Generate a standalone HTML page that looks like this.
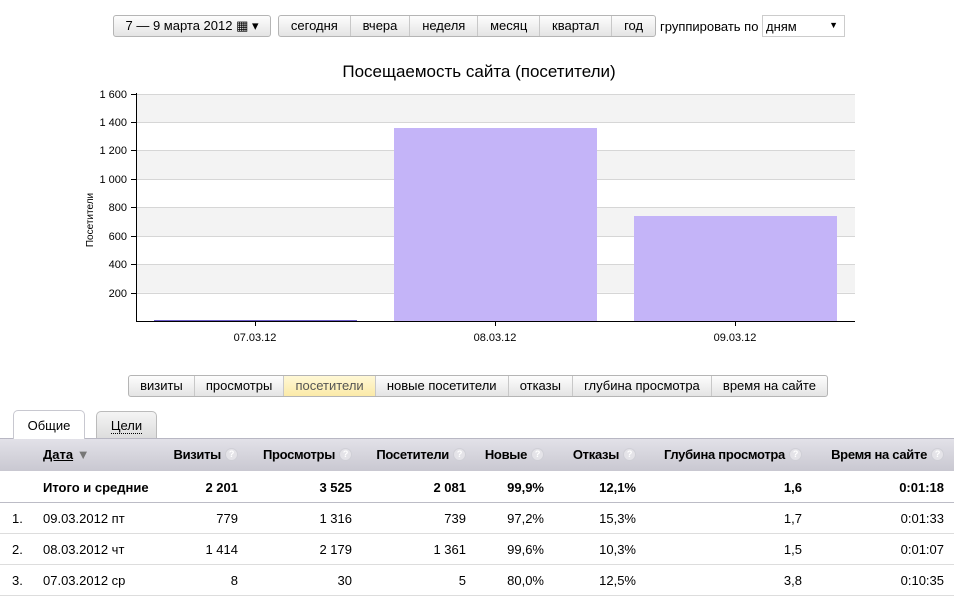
<!DOCTYPE html>
<html><head><meta charset="utf-8"><style>
body{margin:0;width:958px;height:596px;background:#fff;font-family:"Liberation Sans",Arial,sans-serif;font-size:13px;color:#000;position:relative;overflow:hidden}
.a{position:absolute;white-space:nowrap}
.btn{position:absolute;height:22px;border:1px solid #b5b5b5;border-radius:3px;background:linear-gradient(#fdfdfd,#e4e4e4);display:flex;box-sizing:border-box;white-space:nowrap}
.btn span{display:block;flex:auto;text-align:center;padding:0 10px;line-height:20px;border-left:1px solid #c8c8c8}
.btn span:first-child{border-left:none}
.btn span.on{background:linear-gradient(#fff8d6,#fbeaa8);color:#555}
.q{display:inline-block;width:13px;height:13px;border-radius:50%;background:#e4e3e8;border:1px solid #cfcfd6;box-sizing:border-box;color:#fff;font-size:9px;line-height:11px;text-align:center;font-weight:bold;margin-left:4px;vertical-align:top;margin-top:1px}
.r{position:absolute;text-align:right;white-space:nowrap;line-height:15px}
.row{position:absolute;left:0;width:954px;border-bottom:1px solid #ddd}
.h{font-weight:bold}
.hd{letter-spacing:-0.3px}
</style></head><body>
<div class="btn" style="left:113px;top:15px;width:158px"><span style="padding:0">7 — 9 марта 2012 ▦ ▾</span></div>
<div class="btn" style="left:278px;top:15px;width:378px"><span>сегодня</span><span>вчера</span><span>неделя</span><span>месяц</span><span>квартал</span><span>год</span></div>
<div class="a" style="left:660px;top:19px">группировать по</div>
<div class="a" style="left:762px;top:15px;width:83px;height:22px;border:1px solid #ccc;box-sizing:border-box;padding:3px 0 0 3px">дням<span style="position:absolute;right:6px;top:4px;font-size:9px">▼</span></div>
<div class="a" style="left:0;width:958px;text-align:center;top:62px;font-size:17px">Посещаемость сайта (посетители)</div>
<svg class="a" style="left:0;top:0" width="958" height="350">
<g fill="#f3f3f3"><rect x="137" y="94" width="718" height="28.4"/><rect x="137" y="150.8" width="718" height="28.4"/><rect x="137" y="207.6" width="718" height="28.4"/><rect x="137" y="264.4" width="718" height="28.4"/></g>
<g stroke="#d6d6d6"><line x1="137" x2="855" y1="94.5" y2="94.5"/><line x1="137" x2="855" y1="122.5" y2="122.5"/><line x1="137" x2="855" y1="150.5" y2="150.5"/><line x1="137" x2="855" y1="179.5" y2="179.5"/><line x1="137" x2="855" y1="207.5" y2="207.5"/><line x1="137" x2="855" y1="236.5" y2="236.5"/><line x1="137" x2="855" y1="264.5" y2="264.5"/><line x1="137" x2="855" y1="293.5" y2="293.5"/></g>
<rect x="394" y="128" width="203" height="193" fill="#c4b4f8"/>
<rect x="634" y="216" width="203" height="105" fill="#c4b4f8"/>
<rect x="154" y="320" width="203" height="1" fill="#6c5cc8"/>
<g stroke="#000"><line x1="136.5" y1="93" x2="136.5" y2="321"/><line x1="136" y1="321.5" x2="855" y2="321.5"/>
<line x1="131" x2="136" y1="94.5" y2="94.5"/><line x1="131" x2="136" y1="122.5" y2="122.5"/><line x1="131" x2="136" y1="150.5" y2="150.5"/><line x1="131" x2="136" y1="179.5" y2="179.5"/><line x1="131" x2="136" y1="207.5" y2="207.5"/><line x1="131" x2="136" y1="236.5" y2="236.5"/><line x1="131" x2="136" y1="264.5" y2="264.5"/><line x1="131" x2="136" y1="293.5" y2="293.5"/>
<line x1="255.5" x2="255.5" y1="321" y2="326"/><line x1="495.5" x2="495.5" y1="321" y2="326"/><line x1="735.5" x2="735.5" y1="321" y2="326"/></g>
<g font-family="Liberation Sans,Arial,sans-serif" font-size="11" text-anchor="end"><text x="127" y="98">1 600</text><text x="127" y="126">1 400</text><text x="127" y="154">1 200</text><text x="127" y="183">1 000</text><text x="127" y="211">800</text><text x="127" y="240">600</text><text x="127" y="268">400</text><text x="127" y="297">200</text></g>
<g font-family="Liberation Sans,Arial,sans-serif" font-size="11" text-anchor="middle"><text x="255" y="341">07.03.12</text><text x="495" y="341">08.03.12</text><text x="735" y="341">09.03.12</text>
<text transform="translate(93,220) rotate(-90)" font-size="10">Посетители</text></g>
</svg>
<div class="btn" style="left:128px;top:375px;width:700px"><span>визиты</span><span>просмотры</span><span class="on">посетители</span><span>новые посетители</span><span>отказы</span><span>глубина просмотра</span><span>время на сайте</span></div>
<div class="a" style="left:13px;top:410px;width:72px;height:29px;border:1px solid #c8c8d0;border-bottom:none;border-radius:5px 5px 0 0;background:#fff;box-sizing:border-box;text-align:center;line-height:30px;z-index:2">Общие</div>
<div class="a" style="left:96px;top:411px;width:61px;height:27px;border:1px solid #bbb;border-bottom:none;border-radius:5px 5px 0 0;background:linear-gradient(#f4f4f4,#ddd);box-sizing:border-box;text-align:center;line-height:28px"><span style="border-bottom:1px dotted #000">Цели</span></div>
<div class="a" style="left:0;top:438px;width:954px;height:33px;background:linear-gradient(#e2e1e8,#c9c8d1);border-top:1px solid #b8b7c3;box-sizing:border-box"></div>
<div class="a h" style="left:43px;top:447px"><span style="text-decoration:underline">Дата</span> <span style="color:#777">▼</span></div>
<div class="r h hd" style="right:720px;top:447px">Визиты<span class="q">?</span></div>
<div class="r h hd" style="right:606px;top:447px">Просмотры<span class="q">?</span></div>
<div class="r h hd" style="right:492px;top:447px">Посетители<span class="q">?</span></div>
<div class="r h hd" style="right:414px;top:447px">Новые<span class="q">?</span></div>
<div class="r h hd" style="right:322px;top:447px">Отказы<span class="q">?</span></div>
<div class="r h hd" style="right:156px;top:447px">Глубина просмотра<span class="q">?</span></div>
<div class="r h hd" style="right:14px;top:447px">Время на сайте<span class="q">?</span></div>
<div class="row" style="top:471px;height:31px;border-bottom-color:#bcbcc6"></div>
<div class="row" style="top:502px;height:31px"></div>
<div class="row" style="top:533px;height:31px"></div>
<div class="row" style="top:564px;height:31px"></div>
<div class="a h" style="left:43px;top:480px">Итого и средние</div>
<div class="r h" style="right:720px;top:480px">2 201</div><div class="r h" style="right:606px;top:480px">3 525</div><div class="r h" style="right:492px;top:480px">2 081</div><div class="r h" style="right:414px;top:480px">99,9%</div><div class="r h" style="right:322px;top:480px">12,1%</div><div class="r h" style="right:156px;top:480px">1,6</div><div class="r h" style="right:14px;top:480px">0:01:18</div>
<div class="a" style="left:12px;top:511px">1.</div><div class="a" style="left:43px;top:511px">09.03.2012 пт</div>
<div class="r" style="right:720px;top:511px">779</div><div class="r" style="right:606px;top:511px">1 316</div><div class="r" style="right:492px;top:511px">739</div><div class="r" style="right:414px;top:511px">97,2%</div><div class="r" style="right:322px;top:511px">15,3%</div><div class="r" style="right:156px;top:511px">1,7</div><div class="r" style="right:14px;top:511px">0:01:33</div>
<div class="a" style="left:12px;top:542px">2.</div><div class="a" style="left:43px;top:542px">08.03.2012 чт</div>
<div class="r" style="right:720px;top:542px">1 414</div><div class="r" style="right:606px;top:542px">2 179</div><div class="r" style="right:492px;top:542px">1 361</div><div class="r" style="right:414px;top:542px">99,6%</div><div class="r" style="right:322px;top:542px">10,3%</div><div class="r" style="right:156px;top:542px">1,5</div><div class="r" style="right:14px;top:542px">0:01:07</div>
<div class="a" style="left:12px;top:573px">3.</div><div class="a" style="left:43px;top:573px">07.03.2012 ср</div>
<div class="r" style="right:720px;top:573px">8</div><div class="r" style="right:606px;top:573px">30</div><div class="r" style="right:492px;top:573px">5</div><div class="r" style="right:414px;top:573px">80,0%</div><div class="r" style="right:322px;top:573px">12,5%</div><div class="r" style="right:156px;top:573px">3,8</div><div class="r" style="right:14px;top:573px">0:10:35</div>
</body></html>
